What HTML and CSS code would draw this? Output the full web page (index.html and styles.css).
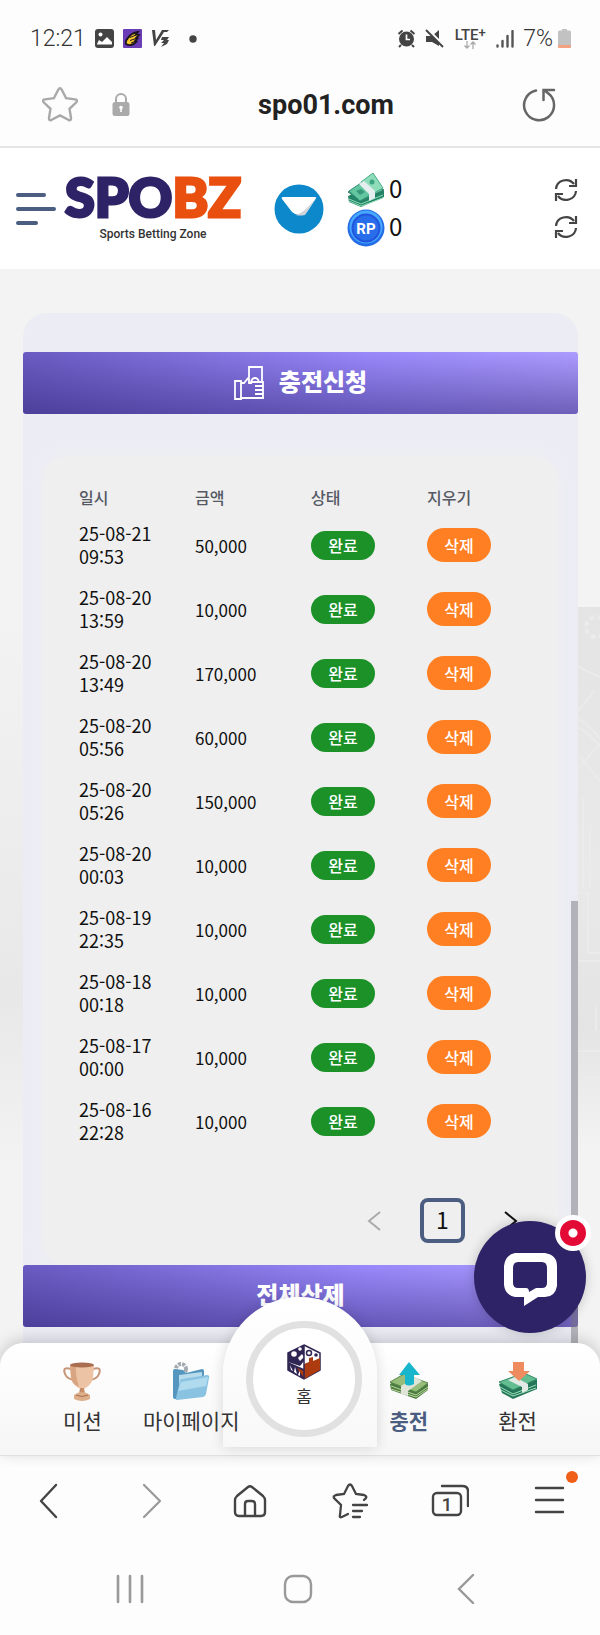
FILE: index.html
```html
<!DOCTYPE html>
<html lang="ko">
<head>
<meta charset="utf-8">
<meta name="viewport" content="width=device-width, initial-scale=1">
<title>SPOBZ 충전신청</title>
<link rel="stylesheet" href="styles.css">
</head>
<body>
<div class="status">
  <div class="status-group status-left">
    <span class="clock">12:21</span>
    <svg width="19" height="19" viewBox="0 0 19 19"><rect width="19" height="19" rx="3" fill="#444"/><circle cx="5.5" cy="5.500" r="2" fill="#fff"/><path d="M2 15l2-4 3 2 5-5 5 5v2.500H2z" fill="#fff"/></svg>
    <svg width="19" height="19" viewBox="0 0 19 19"><rect width="19" height="19" rx="1" fill="#6a3cb5"/><path d="M3 15q-1-3 2-6Q8 4 15 3l-2 2.500 3 .5-3 3 1.500.500L12 12l1.500.500Q9 18 3 15z" fill="#f7c52c" stroke="#1a1420" stroke-width="1.800"/><path d="M7 8.500l6-2.500M7 11.500l6-2M8 14l4-1.500" stroke="#1a1420"/></svg>
    <svg width="20" height="19" viewBox="0 0 20 19"><path d="M1 1h3l1 10 6-10h7l-2 2h-3L4 17H3z" fill="#444"/><path d="M11 8h7l-2 3h2l-2 4-6 3 3-4h-3l3-3h-3z" fill="#444"/></svg>
    <svg width="24" height="8" viewBox="0 0 24 8"><circle cx="13" cy="4" r="3.700" fill="#444"/></svg>
  </div>
  <div class="status-group">
    <svg width="19" height="19" viewBox="0 0 19 19"><circle cx="9.500" cy="10" r="7.500" fill="#444"/><path d="M1.500 5l4-3.500M17.500 5l-4-3.500M4 16l-2 2M15 16l2 2" stroke="#444" stroke-width="2"/><path d="M9.500 5.500v5H13" fill="none" stroke="#fff" stroke-width="1.700"/></svg>
    <svg width="19" height="19" viewBox="0 0 19 19"><path d="M1 7h6l7-6v16l-7-4H1z" fill="#444"/><path d="M2 0l17 17" stroke="#fff" stroke-width="3"/><path d="M1 1l17 17" stroke="#444" stroke-width="2"/></svg>
    <span class="lte">LTE<sup>+</sup><svg width="12" height="8" viewBox="0 0 12 8"><path d="M3 0v7M.500 4.500L3 7l2.500-2.500M9 8V1M6.500 3.500L9 1l2.500 2.500" fill="none" stroke="#aaa" stroke-width="1.300"/></svg></span>
    <svg class="signal" width="18" height="18" viewBox="0 0 18 18"><path d="M1.500 15.500v1M6.500 11v5.500M11.500 6v10.500M16.500 1v15.500" stroke="#555" stroke-width="2.400" stroke-linecap="round"/></svg>
    <span class="battery-text">7%</span>
    <svg class="battery" width="13" height="19" viewBox="0 0 13 19"><path d="M4 0h5v1.500h2.500A1.500 1.500 0 0 1 13 3v14.500a1.500 1.500 0 0 1-1.500 1.500h-10A1.500 1.500 0 0 1 0 17.500V3a1.500 1.500 0 0 1 1.500-1.500H4z" fill="#c2c2c2"/><path d="M0 16h13v1.500a1.500 1.500 0 0 1-1.500 1.500h-10A1.500 1.500 0 0 1 0 17.500z" fill="#f3a183"/></svg>
  </div>
</div>
<div class="address">
  <button class="plain" aria-label="북마크"><svg width="36" height="36" viewBox="0 0 36 36"><path d="M16.200 2.800q1.800-3.200 3.600 0l4.300 8.400 9 1.200q3.200.6 1 3.100l-6.600 6.300 1.500 9.200q.3 3.200-2.700 1.800L18 28.400l-8.300 4.400q-3 1.400-2.700-1.800l1.500-9.200-6.600-6.300q-2.200-2.500 1-3.100l9-1.200z" fill="none" stroke="#a9a9a9" stroke-width="2.400"/></svg></button>
  <svg class="lock" width="18" height="23" viewBox="0 0 18 23"><path d="M4 11V6a5 5 0 0 1 10 0v5" fill="none" stroke="#aaa" stroke-width="2"/><rect x=".5" y="9" width="17" height="14" rx="2.500" fill="#aaa"/><circle cx="9" cy="14.500" r="1.800" fill="#fff"/><path d="M9 15v4" stroke="#fff" stroke-width="1.600"/></svg>
  <a class="url" href="#">spo01.com</a>
  <button class="plain" aria-label="새로고침"><svg width="34" height="34" viewBox="0 0 34 34"><path d="M14 2.500A15 15 0 1 0 26.500 5.500M21.500 12V2h10.500M22 2l5 4" fill="none" stroke="#666" stroke-width="2.500" stroke-linecap="round"/></svg></button>
</div>
<header class="header">
  <button class="plain" aria-label="메뉴"><svg width="40" height="34" viewBox="0 0 40 34"><path d="M2 3h26M2 17h36M2 31h18" stroke="#4b5d80" stroke-width="4" stroke-linecap="round"/></svg></button>
  <a class="logo" href="#"><span class="logo-name">SPO<b>BZ</b></span><span class="logo-tag">Sports Betting Zone</span></a>
  <a class="telegram" href="#" aria-label="텔레그램"><svg width="50" height="50" viewBox="0 0 50 50"><circle cx="25" cy="25" r="24.500" fill="#0d88cb"/><path d="M9 13h32q2 0 .5 2L33 28q-8 6-15 0L8 15q-1-2 1-2z" fill="#fff"/><path d="M42 14L31 31q-6 1-9 0 8-2 20-17z" fill="#d0d3d8"/></svg></a>
  <div class="balances">
    <div class="balance"><svg width="38" height="36" viewBox="0 0 38 36"><path d="M1 24l24-10 12 5v6L14 35 2 30z" fill="#238367"/><path d="M2 27l12 5 22-9M2 29l12 5 22-8" fill="none" stroke="#8cdcb5"/><path d="M1 20L24 12l13 6-23 11z" fill="#61bd98" stroke="#277a61"/><path d="M14 10L26 1l10 15-14 8z" fill="#8fdcba" stroke="#46ad89"/><path d="M2 19l12-8 13 10-14 8z" fill="#62c6a0" stroke="#319073"/><circle cx="25" cy="10" r="2.500" fill="#3ca582"/><path d="M9 19l5-2 4 3-5 3z" fill="#39997b"/><path d="M12 12l5-3 11 10v7l-6 3v-7z" fill="#e5eeee"/></svg><span>0</span></div>
    <div class="balance"><svg width="38" height="38" viewBox="0 0 38 38"><circle cx="19" cy="19" r="18.500" fill="#246de6"/><circle cx="19" cy="18" r="16.500" fill="#46a8ff"/><circle cx="19" cy="19" r="14.500" fill="#2155dd"/><circle cx="19" cy="19" r="12.500" fill="#286de9"/><text class="coin-text" x="19" y="25" text-anchor="middle">RP</text></svg><span>0</span></div>
  </div>
  <div class="refreshes">
    <button class="plain" aria-label="보유금 새로고침"><svg width="24" height="24" viewBox="0 0 24 24"><path d="M2 11A10 9.500 0 0 1 20 6M22 1v7h-7M22 13A10 9.500 0 0 1 4 18M2 23v-7h7" fill="none" stroke="#444" stroke-width="2.200"/></svg></button>
    <button class="plain" aria-label="포인트 새로고침"><svg width="24" height="24" viewBox="0 0 24 24"><path d="M2 11A10 9.500 0 0 1 20 6M22 1v7h-7M22 13A10 9.500 0 0 1 4 18M2 23v-7h7" fill="none" stroke="#444" stroke-width="2.200"/></svg></button>
  </div>
</header>
<main class="main">
  <svg class="backdrop" width="22" height="500" viewBox="0 0 22 500" aria-hidden="true"><g fill="none" stroke="#ebebeb" stroke-width="2"><circle cx="18" cy="20" r="10" stroke-width="4" stroke-dasharray="5 3"/><path d="M0 60l22 10M0 112q14 8 22 20M0 120q14 8 22 20M2 160l20-24M2 150l20 24M0 104l16-20M5 190v90M12 220v60M0 286h10v60h12M0 354h22M18 400v24M0 444h22M0 470h22" /></g></svg>
  <section class="card">
    <h1 class="banner"><svg width="30" height="34" viewBox="0 0 30 34"><path d="M1 15h6v18H1zM7 17h3l5-6V1h13v15M7 32h22V16H17q1-4 4-4t4 4M21 20h8M21 24h8M21 28h8M15 12v5h3" fill="none" stroke="#fff" stroke-width="1.800"/></svg><span>충전신청</span></h1>
    <div class="panel">
      <table class="history">
        <thead><tr><th>일시</th><th>금액</th><th>상태</th><th>지우기</th></tr></thead>
        <tbody>
          <tr><td class="date">25-08-21<br>09:53</td><td>50,000</td><td><span class="done">완료</span></td><td><button class="delete">삭제</button></td></tr>
          <tr><td class="date">25-08-20<br>13:59</td><td>10,000</td><td><span class="done">완료</span></td><td><button class="delete">삭제</button></td></tr>
          <tr><td class="date">25-08-20<br>13:49</td><td>170,000</td><td><span class="done">완료</span></td><td><button class="delete">삭제</button></td></tr>
          <tr><td class="date">25-08-20<br>05:56</td><td>60,000</td><td><span class="done">완료</span></td><td><button class="delete">삭제</button></td></tr>
          <tr><td class="date">25-08-20<br>05:26</td><td>150,000</td><td><span class="done">완료</span></td><td><button class="delete">삭제</button></td></tr>
          <tr><td class="date">25-08-20<br>00:03</td><td>10,000</td><td><span class="done">완료</span></td><td><button class="delete">삭제</button></td></tr>
          <tr><td class="date">25-08-19<br>22:35</td><td>10,000</td><td><span class="done">완료</span></td><td><button class="delete">삭제</button></td></tr>
          <tr><td class="date">25-08-18<br>00:18</td><td>10,000</td><td><span class="done">완료</span></td><td><button class="delete">삭제</button></td></tr>
          <tr><td class="date">25-08-17<br>00:00</td><td>10,000</td><td><span class="done">완료</span></td><td><button class="delete">삭제</button></td></tr>
          <tr><td class="date">25-08-16<br>22:28</td><td>10,000</td><td><span class="done">완료</span></td><td><button class="delete">삭제</button></td></tr>
        </tbody>
      </table>
      <nav class="pager" aria-label="페이지">
        <button class="plain" aria-label="이전"><svg width="14" height="20" viewBox="0 0 14 20"><path d="M13 1L2 10l11 9" fill="none" stroke="#aaa" stroke-width="2"/></svg></button>
        <button class="page">1</button>
        <button class="plain" aria-label="다음"><svg width="14" height="20" viewBox="0 0 14 20"><path d="M1 1l11 9-11 9" fill="none" stroke="#111" stroke-width="2"/></svg></button>
      </nav>
    </div>
    <button class="banner">전체삭제</button>
    <span class="scrollbar"></span>
  </section>
</main>
<nav class="tabs">
  <a class="home-tab" href="#"><span class="home-ring">
    <svg width="36" height="36" viewBox="0 0 36 36"><path d="M18 1l16 8v17l-16 9L2 26V9z" fill="#fff" stroke="#302653" stroke-width="1.500"/><path d="M2 9l16-8v16l-4 5-12-4z" fill="#302653"/><path d="M18 20l5-2v-4l4-1v4l7-3v12l-16 9z" fill="#ac3b10"/><path d="M2 18l16 7v10L2 26z" fill="#302653"/><g fill="#fff"><circle cx="8" cy="10" r="2.800"/><circle cx="14" cy="5" r="1.800"/><path d="M12 14l4-4 2 3-4 4zM4 21l3 6-2-1zM9 23l2 7-3-2zM14 26v6l-2-1z"/></g><path d="M11 24l7 3v7z" fill="#ac3b10"/><circle cx="23" cy="9" r="2.500" fill="none" stroke="#302653" stroke-width="1.500"/><circle cx="30" cy="11" r="1.800" fill="#302653"/><path d="M18 1v34" stroke="#302653" stroke-width="1.500"/></svg>
    <span>홈</span></span></a>
  <a class="tab" href="#"><svg width="40" height="40" viewBox="0 0 40 40"><path d="M9 8Q0 5 3 13q2 5 9 6M31 8q9-3 6 5-2 5-9 6" fill="none" stroke="#c79477" stroke-width="2"/><path d="M8 4h24l-1 13q-2 9-11 11Q11 26 9 17z" fill="#ecc3a4"/><path d="M8 4h6q-1 10 3 22-7-3-8-9z" fill="#d8a582"/><ellipse cx="20" cy="4" rx="12" ry="2.500" fill="#a96d50"/><path d="M18 27h4l1 6h-6z" fill="#c58e66"/><path d="M12 34q8-6 16 0v4q-8 4-16 0z" fill="#dcae89"/><path d="M14 34q6 3 12 0" stroke="#a96e4d" fill="none"/></svg><span>미션</span></a>
  <a class="tab" href="#"><svg width="40" height="40" viewBox="0 0 40 40"><circle cx="10" cy="8" r="5" fill="none" stroke="#a4abb1" stroke-width="4" stroke-dasharray="3 1"/><path d="M2 10q0-2 2-2l8 1 3 3 16-4q2 0 2 2v24L5 38q-3 0-3-2z" fill="#5596bf"/><path d="M8 14l23-3v22L8 36z" fill="#b9dced"/><path d="M9 20q0-2 2-2l25-4q3 0 2 3l-3 16q-1 3-3 3L6 39q-2 0-1-2z" fill="#8ac3e2"/><path d="M10 21l27-5-2 9-28 5z" fill="#b0daee"/></svg><span>마이페이지</span></a>
  <span class="tab-gap"></span>
  <a class="tab active" href="#"><svg width="40" height="40" viewBox="0 0 40 40"><path d="M1 23l14-9 24 9v6L27 38 2 29z" fill="#4c7c41"/><path d="M2 25l25 9 12-8M2 28l25 8 12-8" fill="none" stroke="#b9d899"/><path d="M1 21l14-8 24 9-12 9z" fill="#96bd79" stroke="#5b8b4c"/><path d="M12 25l14-9 7 4-14 10v5l-7-2z" fill="#dfe4d8"/><path d="M20 1l11 13h-6v9q-6 3-9 0v-9H10z" fill="#18b6cd"/></svg><span>충전</span></a>
  <a class="tab" href="#"><svg width="40" height="40" viewBox="0 0 40 40"><path d="M1 23l25-8 13 4v9L15 38 4 32z" fill="#26775a"/><path d="M2 26l13 7 23-9M3 29l12 6 23-8" fill="none" stroke="#9be0ba"/><path d="M1 21l25-9 13 6-24 11z" fill="#64bd90" stroke="#348d67"/><path d="M10 19l7-3 13 7v6l-6 3v-6z" fill="#e1eae4"/><path d="M15 1h11v9h6l-11 10L10 10h5z" fill="#ee8c60"/></svg><span>환전</span></a>
  <button class="chat" aria-label="채팅"><svg width="54" height="54" viewBox="0 0 54 54"><path fill-rule="evenodd" d="M12 1h30q12 2 12 13v20q-2 11-12 11h-7L21 54V45h-9Q2 43 1 33V14Q2 3 12 1zm3 9q-5 0-5 6v15q0 5 5 5h8q3 0 3 4l7-4h6q5 0 5-5V16q0-6-5-6z" fill="#fff"/></svg><span class="chat-badge"></span></button>
</nav>
<nav class="toolbar">
  <button class="plain" aria-label="뒤로"><svg width="36" height="36" viewBox="0 0 36 36"><path d="M24 2L9 18l15 16" fill="none" stroke="#444" stroke-width="2.400" stroke-linecap="round" stroke-linejoin="round"/></svg></button>
  <button class="plain" aria-label="앞으로"><svg width="36" height="36" viewBox="0 0 36 36"><path d="M12 2l16 16-16 16" fill="none" stroke="#999" stroke-width="2.200" stroke-linecap="round" stroke-linejoin="round"/></svg></button>
  <button class="plain" aria-label="홈 화면"><svg width="36" height="36" viewBox="0 0 36 36"><path d="M16 4q2-1.500 4 0l11 9q2 2 2 4v12q0 4-4 4H7q-4 0-4-4V17q0-2 2-4zM13 33V21q0-3 3-3h4q3 0 3 3v12" fill="none" stroke="#444" stroke-width="2.400"/></svg></button>
  <button class="plain" aria-label="즐겨찾기"><svg width="36" height="36" viewBox="0 0 36 36"><path d="M16 31l-6 3q-3 1-2-2l1-10-7-7q-1-2 2-3l8-1 4-8q2-3 4 0l4 8 8 1q3 1 2 3l-2 2M21 22h14M21 28h9M21 34h7" fill="none" stroke="#444" stroke-width="2.300" stroke-linecap="round"/></svg></button>
  <button class="plain" aria-label="탭 1개"><svg width="38" height="36" viewBox="0 0 38 36"><rect x="2" y="10" width="28" height="22" rx="4" fill="none" stroke="#444" stroke-width="2.400"/><path d="M11 3h20q6 0 6 5v15" fill="none" stroke="#444" stroke-width="2.400" stroke-linecap="round"/><text class="tab-count" x="16" y="28" text-anchor="middle">1</text></svg></button>
  <button class="plain more" aria-label="더보기"><svg width="36" height="36" viewBox="0 0 36 36"><path d="M4 5h27M4 17h27M4 29h27" stroke="#444" stroke-width="2.400" stroke-linecap="round"/></svg><span class="dot"></span></button>
</nav>
<nav class="system">
  <button class="plain" aria-label="최근 앱"><svg width="30" height="30" viewBox="0 0 30 30"><path d="M3 2v26M15 2v26M27 2v26" stroke="#999" stroke-width="2.600" stroke-linecap="round"/></svg></button>
  <button class="plain" aria-label="시스템 홈"><svg width="30" height="30" viewBox="0 0 30 30"><rect x="2" y="2" width="26" height="26" rx="8" fill="none" stroke="#999" stroke-width="2.400"/></svg></button>
  <button class="plain" aria-label="시스템 뒤로"><svg width="20" height="30" viewBox="0 0 20 30"><path d="M17 1L3 15l14 14" fill="none" stroke="#999" stroke-width="2.400" stroke-linecap="round"/></svg></button>
</nav>
</body>
</html>
```
FILE: styles.css
```css
* { box-sizing: border-box; }
body {
  margin: 0;
  background: #fdfdfd;
  color: #111;
  font-family: "Noto Sans CJK KR", sans-serif;
}
a { color: inherit; text-decoration: none; }
svg { display: block; flex: none; }
button { font-family: inherit; border: 0; margin: 0; }
.plain {
  display: flex;
  align-items: center;
  justify-content: center;
  padding: 0;
  background: none;
}

.status {
  display: flex;
  justify-content: space-between;
  align-items: center;
  height: 77px;
  padding: 0 29px 0 30px;
}
.status-group { display: flex; align-items: center; gap: 9px; }
.clock, .battery-text {
  font: 300 23px Roboto, sans-serif;
  color: #333;
}
.lte {
  display: flex;
  flex-wrap: wrap;
  justify-content: center;
  width: 34px;
  font: 500 15px/12px Roboto, sans-serif;
  color: #444;
}
.lte sup { font-size: 13px; line-height: 8px; }
.battery { margin-left: -4px; }

.address {
  display: flex;
  align-items: center;
  height: 71px;
  padding: 0 44px 14px 42px;
  border-bottom: 2px solid #e6e6e6;
}
.lock { margin-left: 34px; }
.url {
  flex: 1;
  text-align: center;
  font: 700 27px Roboto, sans-serif;
  color: #222;
}

.header {
  display: flex;
  align-items: center;
  height: 121px;
  padding: 0 22px 0 16px;
  background: #fff;
}
.logo {
  display: flex;
  flex-direction: column;
  align-items: center;
  margin: 0 0 8px 9px;
  width: 176px;
}
.logo-name {
  font: 900 54px/58px Lato, sans-serif;
  color: #2d2366;
  -webkit-text-stroke: 3px currentColor;
}
.logo-name b { font-weight: 900; color: #e95010; }
.logo-tag { font: 500 12px/16px Roboto, sans-serif; color: #333; }
.telegram { margin-left: 33px; }
.balances { margin-left: 23px; }
.balance {
  display: flex;
  align-items: center;
  gap: 4px;
  height: 38px;
  font-size: 24px;
  line-height: 32px;
}
.balance span { padding-bottom: 4px; }
.coin-text { font: 700 15px Roboto, sans-serif; fill: #fff; }
.refreshes {
  display: flex;
  flex-direction: column;
  gap: 13px;
  margin-left: auto;
}

.main {
  position: relative;
  padding: 44px 22px 0 23px;
  background:
    linear-gradient(#f3f3f3 338px, #e8e8e8 730px, #f3f3f3 900px) left / 50% 100% no-repeat,
    linear-gradient(#f3f3f3 338px, #e4e4e4 338px, #e9e9e9 600px, #e4e4e4 760px, #f3f3f3 880px) right / 50% 100% no-repeat;
}
.backdrop {
  position: absolute;
  top: 338px;
  right: 0;
}
.card {
  position: relative;
  padding: 39px 0 40px;
  border-radius: 24px 24px 0 0;
  background: #ececf5;
}
.banner {
  display: flex;
  align-items: center;
  justify-content: center;
  gap: 15px;
  width: 100%;
  height: 62px;
  margin: 0;
  padding: 0 0 4px;
  border-radius: 3px;
  background:
    linear-gradient(rgba(47, 35, 115, 0) 0%, rgba(47, 35, 115, 0.500) 100%),
    linear-gradient(90deg, #6a5bc2 0%, #9989fb 62%, #ad9cff 100%);
  font-size: 24px;
  font-weight: 900;
  line-height: 30px;
  color: #fff;
}
.banner svg { margin-top: 4px; }
.panel {
  margin: 43px 20px 0;
  padding: 24px 15px 22px 36px;
  border-radius: 24px;
  background: #efefef;
  box-shadow: 0 0 18px #efefef;
}
.history {
  width: 100%;
  table-layout: fixed;
  border-collapse: collapse;
  font-size: 17px;
  line-height: 23px;
}
.history th, .history td { padding: 0; text-align: left; }
.history th {
  height: 32px;
  font-size: 16px;
  font-weight: 500;
  color: #555963;
}
.history td { height: 64px; vertical-align: middle; }
.history .date { font-size: 18px; }
.done, .delete {
  display: flex;
  align-items: center;
  justify-content: center;
  width: 64px;
  padding: 0;
  font-size: 16px;
  font-weight: 500;
  color: #fff;
}
.done { height: 29px; border-radius: 15px; background: #1c9128; }
.delete { height: 34px; border-radius: 17px; background: #ff7f22; }
.pager {
  display: flex;
  align-items: center;
  justify-content: flex-end;
  gap: 39px;
  margin: 45px 25px 0 0;
}
.page {
  width: 45px;
  height: 45px;
  padding: 0 0 4px;
  border: 4px solid #4b5d80;
  border-radius: 8px;
  background: none;
  font-size: 23px;
  line-height: 32px;
  color: #111;
}
.scrollbar {
  position: absolute;
  top: 588px;
  right: 0;
  bottom: 0;
  width: 7px;
  background: rgba(120, 120, 125, 0.500);
}

.tabs {
  position: relative;
  display: grid;
  grid-template-columns: repeat(5, 1fr);
  margin-top: -24px;
  height: 113px;
  padding: 18px 28px 0;
  border-radius: 24px 24px 0 0;
  border-bottom: 1px solid #e0e0e0;
  background: linear-gradient(#fff, #f6f6f6);
  box-shadow: 0 -3px 16px rgba(0, 0, 0, 0.180);
}
.tab {
  position: relative;
  z-index: 2;
  display: flex;
  flex-direction: column;
  align-items: center;
  gap: 4px;
  font-size: 21px;
  line-height: 30px;
  white-space: nowrap;
  color: #333;
}
.active { font-weight: 700; color: #4b5d80; }
.home-tab {
  position: absolute;
  left: 50%;
  bottom: 8px;
  display: flex;
  justify-content: center;
  width: 154px;
  height: 150px;
  margin-left: -77px;
  padding: 24px 0 0 8px;
  border-radius: 77px 77px 0 0;
  background: linear-gradient(#fff, #f8f8f8);
  box-shadow: 0 0 14px rgba(0, 0, 0, 0.140);
}
.home-ring {
  display: flex;
  flex-direction: column;
  align-items: center;
  width: 116px;
  height: 116px;
  padding-top: 16px;
  border: 7px solid #e1e1e1;
  border-radius: 50%;
  background: #fff;
  font-size: 17px;
  line-height: 32px;
  color: #333;
}
.chat {
  position: absolute;
  z-index: 3;
  right: 14px;
  bottom: 122px;
  display: flex;
  align-items: center;
  justify-content: center;
  width: 112px;
  height: 112px;
  padding: 4px 0 0;
  border-radius: 50%;
  background: #2d2366;
  box-shadow: 0 0 12px rgba(0, 0, 0, 0.200);
}
.chat-badge {
  position: absolute;
  top: -6px;
  right: -5px;
  width: 36px;
  height: 36px;
  border: 5px solid #fff;
  border-radius: 50%;
  background: radial-gradient(circle, #fff 4px, #e30b35 5px);
}

.toolbar {
  display: grid;
  grid-template-columns: repeat(6, 1fr);
  height: 90px;
}
.more { position: relative; }
.dot {
  position: absolute;
  top: 15px;
  right: 22px;
  width: 12px;
  height: 12px;
  border-radius: 50%;
  background: #f06018;
}
.tab-count { font: 500 19px Roboto, sans-serif; fill: #444; }
.system {
  display: grid;
  grid-template-columns: repeat(3, 1fr);
  height: 89px;
  padding: 0 50px 0 46px;
}
.system .plain { padding-bottom: 4px; }
```
